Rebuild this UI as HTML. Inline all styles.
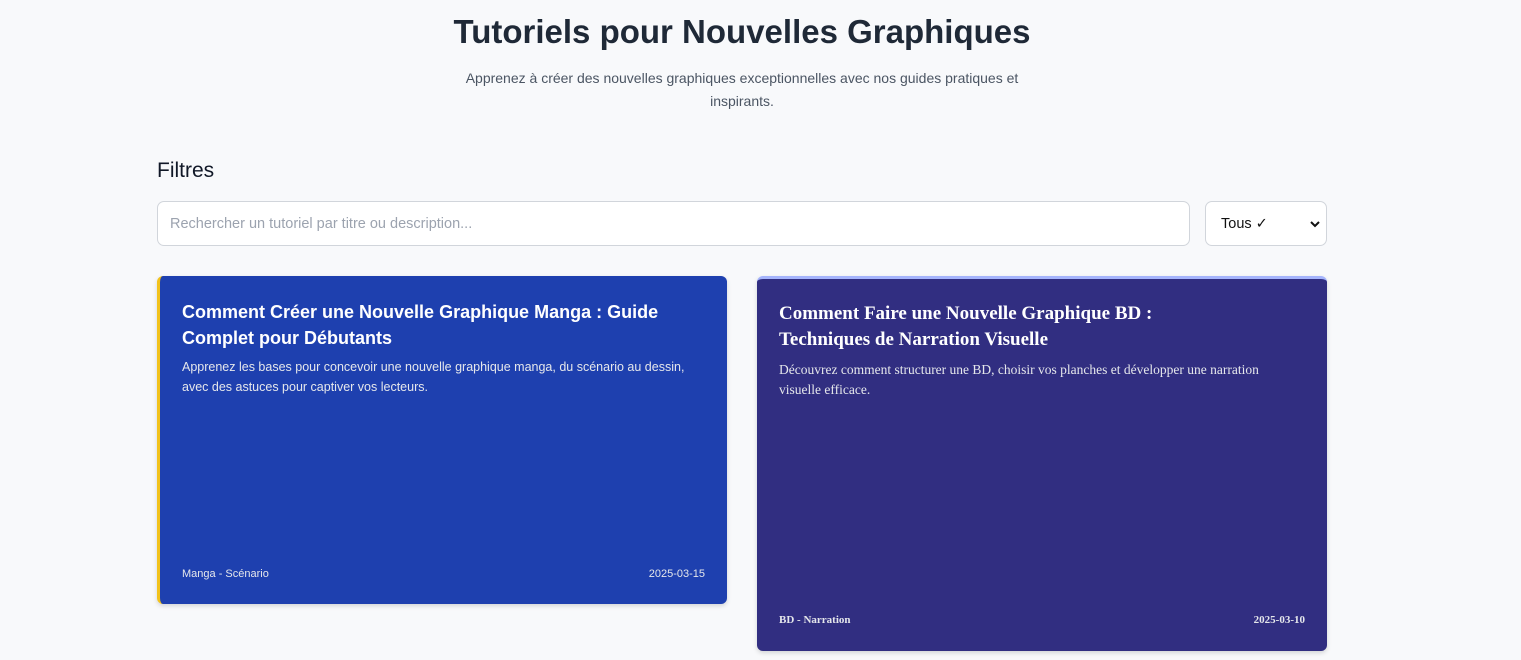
<!DOCTYPE html>
<html><head><meta charset="utf-8"><style>
*{box-sizing:border-box;margin:0;padding:0}
body{width:1521px;height:660px;overflow:hidden;background:#f8f9fb;font-family:"Liberation Sans",sans-serif;color:#1f2937;position:relative}
h1{position:absolute;top:13px;left:0;width:1484px;text-align:center;font-size:33px;font-weight:bold;color:#1f2937}
.sub{position:absolute;top:67px;left:442px;width:600px;text-align:center;font-size:14px;line-height:23px;color:#4b5563}
h2{position:absolute;top:159px;left:157px;font-size:21px;font-weight:normal;color:#111827}
.search{position:absolute;left:157px;top:201px;width:1033px;height:45px;background:#fff;border:1px solid #d1d5db;border-radius:7px;font-size:14.5px;color:#9ca3af;padding:14px 0 0 12px}
.sel{position:absolute;left:1205px;top:201px;width:122px;height:45px;background:#fff;border:1px solid #d1d5db;border-radius:7px;font-size:14.5px;color:#111;padding:14px 0 0 15px}
.sel svg{position:absolute;right:6px;top:18px}
.card{position:absolute;border-radius:6px;color:#fff;box-shadow:0 2px 5px rgba(0,0,0,.15)}
.c1{left:157px;top:276px;width:570px;height:328px;background:#1e40af;border-left:3px solid #f2c21b}
.c2{left:757px;top:276px;width:570px;height:375px;background:#312e81;border-top:3px solid #a5b4fc;font-family:"Liberation Serif",serif}
.t{position:absolute;left:22px;width:520px;font-size:18px;font-weight:bold;line-height:26px}
.d{position:absolute;left:22px;width:530px;font-size:12.5px;line-height:20px;color:#e5e7eb}
.f{position:absolute;font-size:11px;color:#e5e7eb}
</style></head><body>
<h1>Tutoriels pour Nouvelles Graphiques</h1>
<div class="sub">Apprenez à créer des nouvelles graphiques exceptionnelles avec nos guides pratiques et inspirants.</div>
<h2>Filtres</h2>
<div class="search">Rechercher un tutoriel par titre ou description...</div>
<div class="sel">Tous ✓<svg width="10" height="8" viewBox="0 0 10 8"><path d="M1 2l4 4 4-4" stroke="#111" stroke-width="2" fill="none"/></svg></div>
<div class="card c1">
<div class="t" style="top:23px">Comment Créer une Nouvelle Graphique Manga : Guide Complet pour Débutants</div>
<div class="d" style="top:81px">Apprenez les bases pour concevoir une nouvelle graphique manga, du scénario au dessin, avec des astuces pour captiver vos lecteurs.</div>
<div class="f" style="left:22px;top:292px">Manga - Scénario</div>
<div class="f" style="right:22px;top:292px">2025-03-15</div>
</div>
<div class="card c2">
<div class="t" style="top:22px;left:22px;width:450px;font-size:19px">Comment Faire une Nouvelle Graphique BD : Techniques de Narration Visuelle</div>
<div class="d" style="top:81px;left:22px;width:520px;font-size:13.5px">Découvrez comment structurer une BD, choisir vos planches et développer une narration visuelle efficace.</div>
<div class="f" style="left:22px;top:335px;font-weight:bold">BD - Narration</div>
<div class="f" style="right:22px;top:335px;font-weight:bold">2025-03-10</div>
</div>
</body></html>
